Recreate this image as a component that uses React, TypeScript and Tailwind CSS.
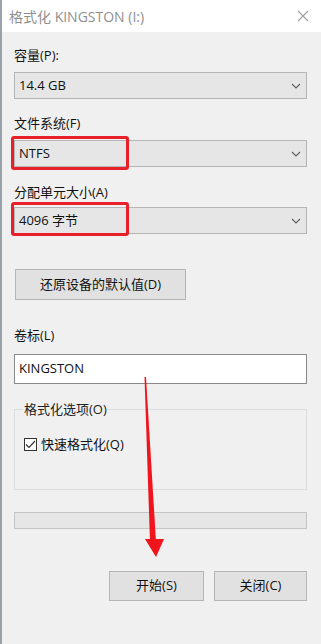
import React from "react";

const font = {
  fontFamily: '"Segoe UI", "Open Sans", "Noto Sans CJK SC", sans-serif',
};

function Chevron() {
  return (
    <svg width="10" height="6" viewBox="0 0 10 6" className="mr-[5px]">
      <path d="M1 1 L5 5 L9 1" fill="none" stroke="#606060" strokeWidth="1.1" />
    </svg>
  );
}

function Combo({ value }: { value: string }) {
  return (
    <div className="flex h-[27px] items-center justify-between border border-[#b5b5b5] bg-[#e6e6e6] pl-[4px] text-[13px] text-[#111]">
      <span>{value}</span>
      <Chevron />
    </div>
  );
}

export default function App() {
  return (
    <div
      className="relative h-[644px] w-[321px] overflow-hidden border-l-2 border-[#9aa3ab] bg-[#f0f0f0]"
      style={font}
    >
      {/* title bar */}
      <div className="flex h-[32px] items-center justify-between bg-white pl-[7px] pr-[12px]">
        <span className="text-[14px] text-[#8f8f8f]">格式化 KINGSTON (I:)</span>
        <svg width="12" height="12" viewBox="0 0 12 12">
          <path d="M1 1 L11 11 M11 1 L1 11" stroke="#a0a0a0" strokeWidth="1.1" />
        </svg>
      </div>

      <div className="flex flex-col pl-[12px] pr-[14px] text-[13px] text-[#111]">
        <div className="mt-[15px] h-[16px] leading-[16px]">容量(P):</div>
        <div className="mt-[9px]">
          <Combo value="14.4 GB" />
        </div>

        <div className="mt-[16px] h-[16px] leading-[16px]">文件系统(F)</div>
        <div className="mt-[9px]">
          <Combo value="NTFS" />
        </div>

        <div className="mt-[17px] h-[16px] leading-[16px]">分配单元大小(A)</div>
        <div className="mt-[7px]">
          <Combo value="4096 字节" />
        </div>

        <div className="mt-[35px] flex h-[31px] w-[171px] items-center justify-center border border-[#b5b5b5] bg-[#e1e1e1] ml-[1px]">
          还原设备的默认值(D)
        </div>

        <div className="mt-[27px] h-[16px] leading-[16px]">卷标(L)</div>
        <div className="mt-[11px] flex h-[30px] items-center border border-[#8a8a8a] bg-white pl-[4px]">
          KINGSTON
        </div>

        <div className="relative mt-[25px] h-[81px] border border-[#dcdcdc]">
          <span className="absolute left-[8px] top-[-9px] bg-[#f0f0f0] px-[1px] leading-[16px] text-[#222]">
            格式化选项(O)
          </span>
          <div className="ml-[9px] mt-[26px] flex items-center gap-[4px]">
            <div className="flex h-[13px] w-[13px] items-center justify-center border border-[#333] bg-white">
              <svg width="11" height="9" viewBox="0 0 11 9">
                <path d="M1 4.5 L4 7.5 L10 1" fill="none" stroke="#333" strokeWidth="1.2" />
              </svg>
            </div>
            <span className="leading-[16px]">快速格式化(Q)</span>
          </div>
        </div>

        <div className="mt-[22px] h-[17px] border border-[#c4c4c4] bg-[#e6e6e6]" />

        <div className="mt-[42px] flex justify-end gap-[10px]">
          <div className="flex h-[30px] w-[95px] items-center justify-center border border-[#b5b5b5] bg-[#e1e1e1]">
            开始(S)
          </div>
          <div className="flex h-[30px] w-[93px] items-center justify-center border border-[#b5b5b5] bg-[#e1e1e1]">
            关闭(C)
          </div>
        </div>
      </div>

      {/* red annotation boxes */}
      <div className="absolute left-[9px] top-[136px] h-[34px] w-[118px] rounded-[3px] border-[3px] border-[#e8202a]" />
      <div className="absolute left-[9px] top-[202px] h-[34px] w-[118px] rounded-[3px] border-[3px] border-[#e8202a]" />

      {/* red arrow */}
      <svg
        className="absolute left-0 top-0"
        width="321"
        height="644"
        viewBox="0 0 321 644"
      >
        <polygon points="142.5,377 144,377 154,542 148,542" fill="#f0141c" />
        <polygon points="143,539 162,539 154,557" fill="#f0141c" />
      </svg>
    </div>
  );
}
